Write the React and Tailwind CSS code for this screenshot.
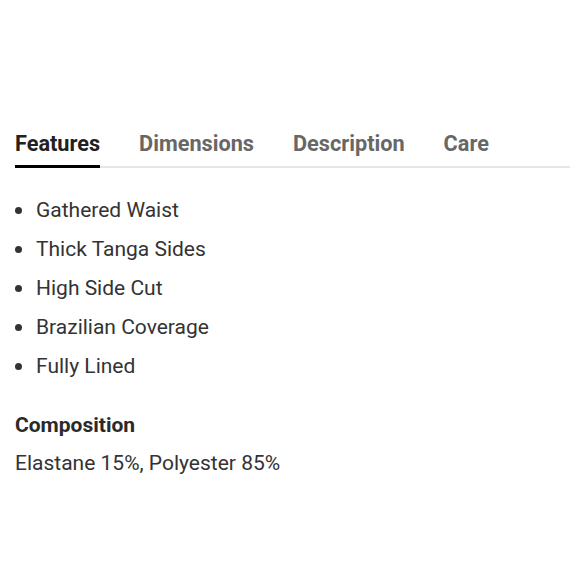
import React, { useState } from 'react';

const tabs = ['Features', 'Dimensions', 'Description', 'Care'];
const features = ['Gathered Waist', 'Thick Tanga Sides', 'High Side Cut', 'Brazilian Coverage', 'Fully Lined'];

export default function App() {
    const [active, setActive] = useState('Features');

    return (
        <div className="min-h-[580px] bg-white pt-[132px] pl-[15px] pr-[10px] text-[#333] font-['Roboto',sans-serif]">
            {/* Tabs */}
            <div className="flex gap-[39px] border-b-2 border-[#e6e6e6]">
                {tabs.map((t) => (
                    <button
                        key={t}
                        onClick={() => setActive(t)}
                        className={
                            t === active
                                ? "-mb-[2px] pb-[9px] text-[21.7px] leading-[24px] font-bold text-[#212121] border-b-[3px] border-black"
                                : "-mb-[2px] pb-[9px] text-[21.7px] leading-[24px] font-bold text-[#676767] border-b-[3px] border-transparent"
                        }
                    >
                        {t}
                    </button>
                ))}
            </div>

            {/* Feature list */}
            <ul className="mt-[23px]">
                {features.map((f) => (
                    <li key={f} className="flex items-center text-[21px] leading-[39px]">
                        <span className="w-[7px] h-[7px] rounded-full bg-[#333] mr-[14px]" />
                        {f}
                    </li>
                ))}
            </ul>

            {/* Composition */}
            <h3 className="mt-[25px] text-[21px] leading-[28px] font-bold text-[#2a2a2a]">Composition</h3>
            <p className="mt-[10px] text-[21px] leading-[28px]">Elastane 15%, Polyester 85%</p>
        </div>
    );
}
